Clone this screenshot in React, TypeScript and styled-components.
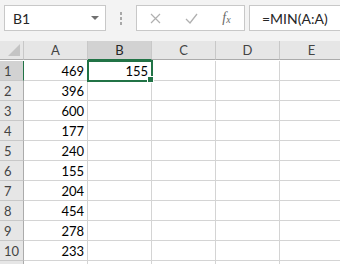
import React from "react";
import styled, { createGlobalStyle } from "styled-components";

const Global = createGlobalStyle`
  html, body { margin: 0; padding: 0; background: #ffffff; overflow: hidden; }
  * { box-sizing: border-box; }
`;

const Page = styled.div`
  width: 340px;
  height: 264px;
  display: flex;
  flex-direction: column;
  overflow: hidden;
  background: #ffffff;
  font-family: Lato, "Liberation Sans", sans-serif;
`;

const Toolbar = styled.div`
  height: 41px;
  flex: none;
  display: flex;
  align-items: flex-start;
  padding: 5px 0 0 4px;
  background: #f3f3f3;
`;

const Box = styled.div<{ $w: number }>`
  width: ${(p) => p.$w}px;
  height: 26px;
  flex: none;
  background: #ffffff;
  border: 1px solid #c8c8c8;
  display: flex;
  align-items: center;
`;

const NameText = styled.span`
  flex: 1;
  padding-left: 8px;
  font-size: 14px;
  color: #262626;
`;

const DropArrow = styled.span`
  width: 0;
  height: 0;
  margin-right: 6px;
  border-left: 4px solid transparent;
  border-right: 4px solid transparent;
  border-top: 4px solid #707070;
`;

const Dots = styled.div`
  width: 30px;
  height: 26px;
  flex: none;
  display: flex;
  flex-direction: column;
  align-items: center;
  justify-content: center;
  gap: 2px;
  span {
    width: 2px;
    height: 3px;
    background: #a8a8a8;
  }
`;

const IconSlot = styled.div<{ $w: number }>`
  width: ${(p) => p.$w}px;
  height: 100%;
  display: flex;
  align-items: center;
  justify-content: center;
`;

const Fx = styled.span`
  font-family: "Liberation Serif", serif;
  font-style: italic;
  font-size: 14px;
  color: #6a6a6a;
  sub {
    font-size: 10px;
    vertical-align: -1px;
  }
`;

const Gap = styled.div<{ $w: number }>`
  width: ${(p) => p.$w}px;
  flex: none;
`;

const FormulaBox = styled.div`
  flex: 1;
  height: 26px;
  background: #ffffff;
  border: 1px solid #c8c8c8;
  border-right: none;
  display: flex;
  align-items: center;
  padding-left: 12px;
  font-size: 14px;
  color: #262626;
`;

const Grid = styled.div`
  display: grid;
  grid-template-columns: 24px repeat(5, 64px);
  grid-auto-rows: 20px;
  flex: none;
`;

const Corner = styled.div`
  height: 19px;
  background: #e6e6e6;
  border-right: 1px solid #c8c8c8;
  border-bottom: 1px solid #ababab;
  position: relative;
  &::after {
    content: "";
    position: absolute;
    right: 3px;
    bottom: 3px;
    width: 0;
    height: 0;
    border-left: 12px solid transparent;
    border-bottom: 12px solid #c4c4c4;
  }
`;

const ColHead = styled.div<{ $sel?: boolean }>`
  height: 19px;
  background: ${(p) => (p.$sel ? "#d2d2d2" : "#e6e6e6")};
  border-right: 1px solid #c8c8c8;
  border-bottom: 1px solid ${(p) => (p.$sel ? "#217346" : "#ababab")};
  display: flex;
  align-items: center;
  justify-content: center;
  font-size: 13px;
  color: ${(p) => (p.$sel ? "#262626" : "#444444")};
`;

const RowHead = styled.div<{ $sel?: boolean }>`
  background: ${(p) => (p.$sel ? "#d2d2d2" : "#e6e6e6")};
  border-right: 1px solid ${(p) => (p.$sel ? "#217346" : "#ababab")};
  border-bottom: 1px solid #c8c8c8;
  display: flex;
  align-items: center;
  padding-left: 4px;
  font-size: 13px;
  color: #444444;
`;

const Cell = styled.div<{ $sel?: boolean }>`
  position: relative;
  border-right: 1px solid #d4d4d4;
  border-bottom: 1px solid #d4d4d4;
  display: flex;
  align-items: center;
  justify-content: flex-end;
  padding-right: 3px;
  font-size: 13px;
  color: #000000;
  ${(p) =>
    p.$sel
      ? `
    outline: 2px solid #217346;
    outline-offset: -1px;
    z-index: 1;
    &::after {
      content: "";
      position: absolute;
      right: -3px;
      bottom: -3px;
      width: 5px;
      height: 5px;
      background: #217346;
      border: 1px solid #ffffff;
    }
  `
      : ""}
`;

const values: (number | null)[] = [469, 396, 600, 177, 240, 155, 204, 454, 278, 233, null];
const cols = ["A", "B", "C", "D", "E"];

export default function App() {
  return (
    <Page>
      <Global />
      <Toolbar>
        <Box $w={102}>
          <NameText>B1</NameText>
          <DropArrow />
        </Box>
        <Dots>
          <span />
          <span />
          <span />
        </Dots>
        <Box $w={109}>
          <IconSlot $w={36}>
            <svg width="11" height="11" viewBox="0 0 11 11">
              <path d="M1 1L10 10M10 1L1 10" stroke="#b0b0b0" strokeWidth="1.2" fill="none" />
            </svg>
          </IconSlot>
          <IconSlot $w={36}>
            <svg width="13" height="11" viewBox="0 0 13 11">
              <path d="M1 6L5 10L12 1" stroke="#b0b0b0" strokeWidth="1.3" fill="none" />
            </svg>
          </IconSlot>
          <IconSlot $w={35}>
            <Fx>
              f<sub>x</sub>
            </Fx>
          </IconSlot>
        </Box>
        <Gap $w={4} />
        <FormulaBox>=MIN(A:A)</FormulaBox>
      </Toolbar>
      <Grid>
        <Corner />
        {cols.map((c) => (
          <ColHead key={c} $sel={c === "B"}>
            {c}
          </ColHead>
        ))}
        {values.map((v, i) => (
          <React.Fragment key={i}>
            <RowHead $sel={i === 0}>{i < 10 ? i + 1 : ""}</RowHead>
            <Cell>{v ?? ""}</Cell>
            <Cell $sel={i === 0}>{i === 0 ? 155 : ""}</Cell>
            <Cell />
            <Cell />
            <Cell />
          </React.Fragment>
        ))}
      </Grid>
    </Page>
  );
}
